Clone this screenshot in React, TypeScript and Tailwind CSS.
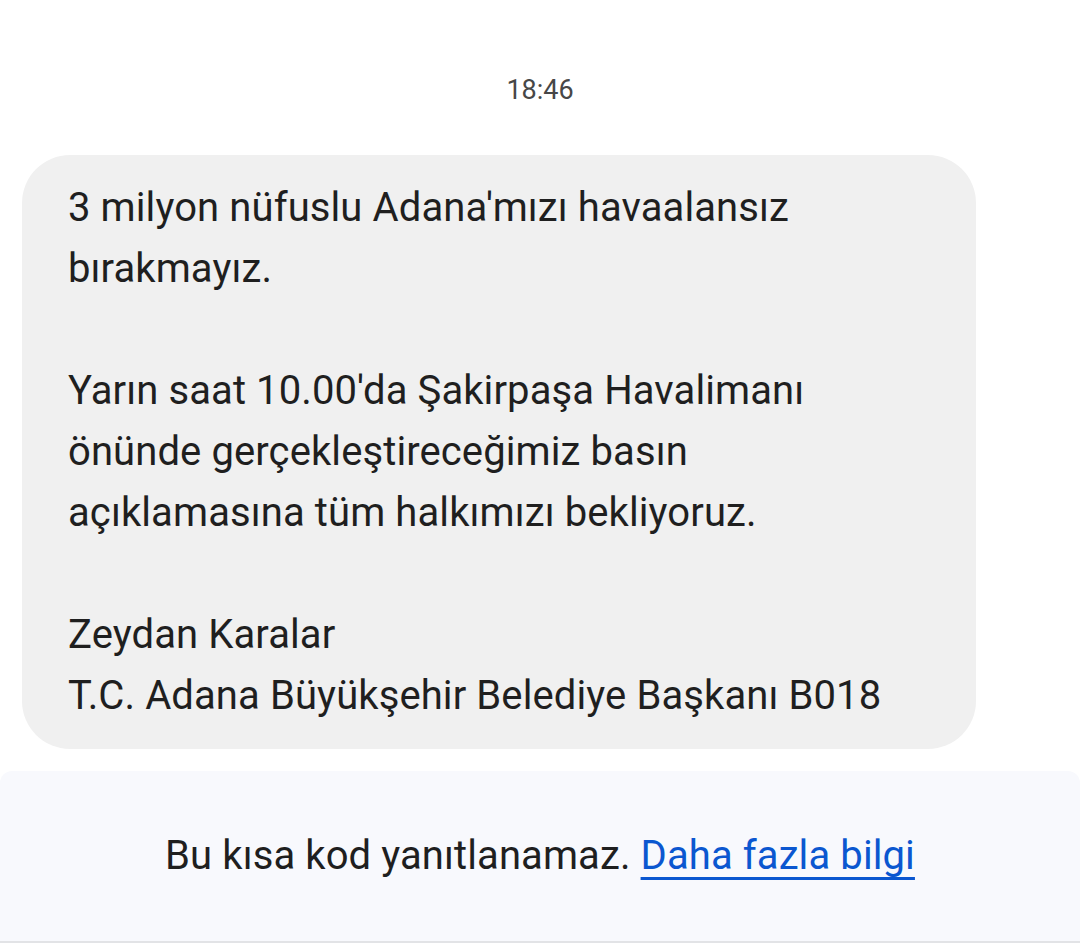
export default function App() {
  const font = { fontFamily: "Roboto, 'Noto Sans', sans-serif" };
  return (
    <div className="w-[1080px] h-[946px] bg-white flex flex-col overflow-hidden" style={font}>
      <div className="h-[155px] flex justify-center pt-[72px]">
        <span className="text-[27px] leading-[36px] text-[#474747]">18:46</span>
      </div>
      <div className="pl-[22px]">
        <div className="w-[954px] bg-[#f0f0f0] rounded-[48px] pl-[46px] pr-[30px] pt-[22px] pb-[23px] text-[40px] leading-[61px] tracking-[0.1px] text-[#1f1f1f]">
          <p>3 milyon nüfuslu Adana'mızı havaalansız<br />bırakmayız.</p>
          <p className="mt-[61px]">Yarın saat 10.00'da Şakirpaşa Havalimanı<br />önünde gerçekleştireceğimiz basın<br />açıklamasına tüm halkımızı bekliyoruz.</p>
          <p className="mt-[61px]">Zeydan Karalar<br />T.C. Adana Büyükşehir Belediye Başkanı B018</p>
        </div>
      </div>
      <div className="mt-[22px] h-[172px] bg-[#f8f9fd] rounded-tl-[12px] rounded-tr-[12px] border-b-2 border-[#e2e3e6] flex items-center justify-center">
        <p className="text-[40px] tracking-[0.1px] text-[#1f1f1f] leading-[48px]">
          Bu kısa kod yanıtlanamaz.{" "}
          <span className="text-[#0b57d0] underline decoration-[3px] underline-offset-[8px]">Daha fazla bilgi</span>
        </p>
      </div>
      <div className="flex-1 bg-white" />
    </div>
  );
}
